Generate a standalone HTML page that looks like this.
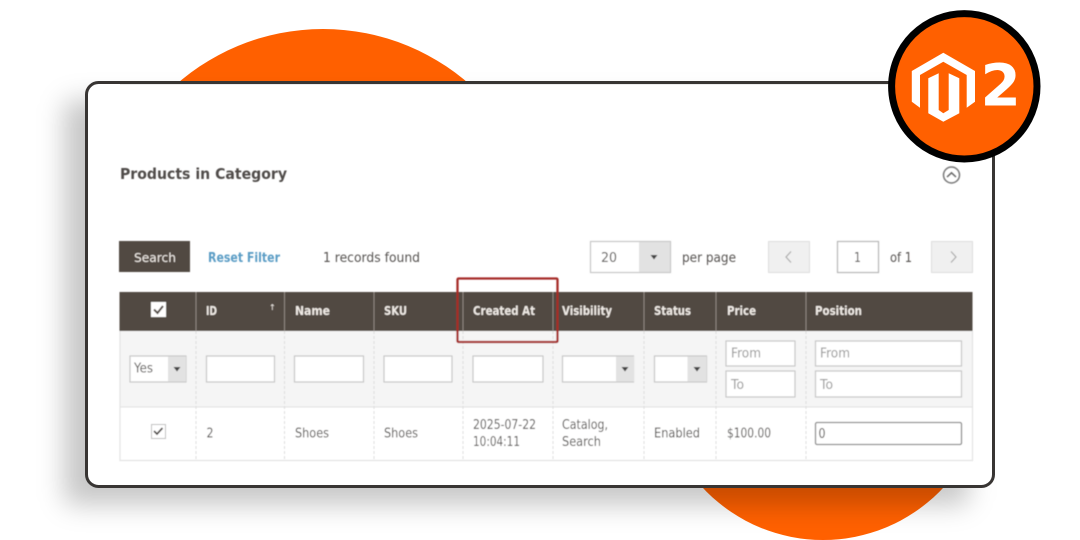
<!DOCTYPE html>
<html><head><meta charset="utf-8"><style>
html,body{margin:0;padding:0;background:#fff;width:1080px;height:540px;overflow:hidden}
svg{display:block}
text{font-family:"DejaVu Sans","Liberation Sans",sans-serif}
.t{font-size:13px;fill:#565351}
.h{font-size:12.7px;font-weight:bold;fill:#efeae5}
.p{font-size:13px;fill:#999}
.i{fill:#fff;stroke:#c6c6c6;stroke-width:1.2}
.ar{fill:#e2e2e2}
</style></head><body>
<svg width="1080" height="540" viewBox="0 0 1080 540" xmlns="http://www.w3.org/2000/svg">
<defs>
<filter id="s" x="-20%" y="-20%" width="140%" height="140%"><feGaussianBlur stdDeviation="13"/></filter>
<filter id="b" x="-2%" y="-2%" width="104%" height="104%"><feGaussianBlur stdDeviation="0.4"/></filter>
</defs>
<circle cx="323" cy="251" r="222" fill="#ff6000"/>
<circle cx="823" cy="375.5" r="164.5" fill="#ff6000"/>
<rect x="64" y="100" width="905" height="405" rx="10" fill="#000" fill-opacity=".22" filter="url(#s)"/>
<rect x="86.500" y="82.500" width="907" height="404" rx="12" fill="#fff" stroke="#383533" stroke-width="3"/>
<rect x="120" y="84" width="873" height="1" fill="#ececec"/>
<g filter="url(#b)">
<text x="120" y="179" font-size="15.500" font-weight="bold" fill="#4f4b48" textLength="167" lengthAdjust="spacingAndGlyphs">Products in Category</text>
<circle cx="951.500" cy="175" r="8" fill="none" stroke="#777" stroke-width="1.500"/>
<path d="M947 177 L951.500 172.800 L956 177" fill="none" stroke="#666" stroke-width="1.500"/>

<rect x="119" y="241" width="71" height="31" fill="#514943"/>
<text x="134" y="262" class="h" textLength="42" lengthAdjust="spacingAndGlyphs" style="font-weight:normal">Search</text>
<text x="208" y="262" font-size="13" font-weight="bold" fill="#5a9cc5" textLength="72" lengthAdjust="spacingAndGlyphs">Reset Filter</text>
<text x="323" y="262" class="t" textLength="97" lengthAdjust="spacingAndGlyphs">1 records found</text>

<rect x="590.500" y="241.500" width="80" height="31" class="i"/>
<rect x="639" y="242" width="31" height="30" class="ar"/>
<path d="M650.500 255h7l-3.500 4.500z" fill="#444"/>
<text x="601" y="262" class="t" textLength="16" lengthAdjust="spacingAndGlyphs">20</text>
<text x="682" y="262" class="t" textLength="54" lengthAdjust="spacingAndGlyphs">per page</text>
<rect x="768.500" y="241.500" width="41" height="31" fill="#f0f0f0" stroke="#dedede"/>
<path d="M791 251.500 L786 257 L791 262.500" fill="none" stroke="#aaa" stroke-width="1.200"/>
<rect x="837.500" y="241.500" width="41" height="31" class="i" style="stroke:#b5b5b5"/>
<text x="854" y="262" class="t" textLength="7" lengthAdjust="spacingAndGlyphs">1</text>
<text x="890" y="262" class="t" textLength="22" lengthAdjust="spacingAndGlyphs">of 1</text>
<rect x="931.500" y="241.500" width="41" height="31" fill="#f0f0f0" stroke="#dedede"/>
<path d="M951 251.500 L956 257 L951 262.500" fill="none" stroke="#aaa" stroke-width="1.200"/>

<rect x="119.500" y="331" width="853" height="76" fill="#f5f5f5"/>
<rect x="119.500" y="407" width="853" height="53" fill="#fff"/>
<path d="M120 331V460.500H972.500V331" fill="none" stroke="#e3e3e3" stroke-width="1.200"/>
<path d="M120 407H972" stroke="#e0e0e0" stroke-width="1"/>
<path d="M196 331V460M284.500 331V460M374 331V460M463 331V460M553 331V460M644 331V460M716 331V460M806 331V460" stroke="#dcdcdc" stroke-width="1" stroke-dasharray="3 2"/>
<rect x="119.500" y="292" width="853" height="39" fill="#514943"/>
<path d="M196 292V331M284.500 292V331M374 292V331M463 292V331M553 292V331M644 292V331M716 292V331M806 292V331" stroke="#8f8780" stroke-width="1"/>

<rect x="151" y="302" width="15" height="15" fill="#fff"/>
<path d="M154 309.500 L157.500 313 L163 306" fill="none" stroke="#514943" stroke-width="2"/>
<text x="206" y="315" class="h" textLength="11" lengthAdjust="spacingAndGlyphs">ID</text>
<text x="269" y="310" font-size="8" fill="#efeae5">↑</text>
<text x="295" y="315" class="h" textLength="35" lengthAdjust="spacingAndGlyphs">Name</text>
<text x="384" y="315" class="h" textLength="23" lengthAdjust="spacingAndGlyphs">SKU</text>
<text x="473" y="315" class="h" textLength="62" lengthAdjust="spacingAndGlyphs">Created At</text>
<text x="562" y="315" class="h" textLength="50" lengthAdjust="spacingAndGlyphs">Visibility</text>
<text x="654" y="315" class="h" textLength="37" lengthAdjust="spacingAndGlyphs">Status</text>
<text x="727" y="315" class="h" textLength="29" lengthAdjust="spacingAndGlyphs">Price</text>
<text x="815" y="315" class="h" textLength="47" lengthAdjust="spacingAndGlyphs">Position</text>

<rect x="130" y="356" width="56" height="26" class="i"/>
<rect x="168" y="356.500" width="18" height="25" class="ar"/>
<path d="M173.500 367h7l-3.500 4.500z" fill="#444"/>
<text x="134" y="372.500" class="t" textLength="19" lengthAdjust="spacingAndGlyphs">Yes</text>
<rect x="206.500" y="356" width="68" height="26" class="i"/>
<rect x="294.500" y="356" width="69" height="26" class="i"/>
<rect x="384" y="356" width="68" height="26" class="i"/>
<rect x="473" y="356" width="70" height="26" class="i"/>
<rect x="562.500" y="356" width="71" height="26" class="i"/>
<rect x="616" y="356.500" width="18" height="25" class="ar"/>
<path d="M621.500 367h7l-3.500 4.500z" fill="#444"/>
<rect x="654.500" y="356" width="52" height="26" class="i"/>
<rect x="687.500" y="356.500" width="19" height="25" class="ar"/>
<path d="M693.500 367h7l-3.500 4.500z" fill="#444"/>
<rect x="726" y="341" width="69" height="25" class="i"/>
<rect x="726" y="371" width="69" height="26" class="i"/>
<rect x="815.500" y="341" width="146" height="25" class="i"/>
<rect x="815.500" y="371" width="146" height="26" class="i"/>
<text x="731" y="357.500" class="p" textLength="30" lengthAdjust="spacingAndGlyphs">From</text>
<text x="731" y="389" class="p" textLength="13" lengthAdjust="spacingAndGlyphs">To</text>
<text x="820" y="357.500" class="p" textLength="30" lengthAdjust="spacingAndGlyphs">From</text>
<text x="820" y="389" class="p" textLength="13" lengthAdjust="spacingAndGlyphs">To</text>

<rect x="151.500" y="424.500" width="14" height="14" fill="#fff" stroke="#bdbdbd"/>
<path d="M154 431 L157 434 L162.500 428" fill="none" stroke="#4a4542" stroke-width="1.700"/>
<text x="206.500" y="437.500" class="t" textLength="7" lengthAdjust="spacingAndGlyphs">2</text>
<text x="295" y="437.500" class="t" textLength="34" lengthAdjust="spacingAndGlyphs">Shoes</text>
<text x="384" y="437.500" class="t" textLength="34" lengthAdjust="spacingAndGlyphs">Shoes</text>
<text x="473" y="429" class="t" textLength="63" lengthAdjust="spacingAndGlyphs">2025-07-22</text>
<text x="473" y="446" class="t" textLength="47" lengthAdjust="spacingAndGlyphs">10:04:11</text>
<text x="562" y="429" class="t" textLength="46" lengthAdjust="spacingAndGlyphs">Catalog,</text>
<text x="562" y="446" class="t" textLength="39" lengthAdjust="spacingAndGlyphs">Search</text>
<text x="654" y="437.500" class="t" textLength="46" lengthAdjust="spacingAndGlyphs">Enabled</text>
<text x="727" y="437.500" class="t" textLength="44" lengthAdjust="spacingAndGlyphs">$100.00</text>
<rect x="815.500" y="422.500" width="146" height="22" rx="1.500" fill="#fff" stroke="#8a8a8a" stroke-width="1.300"/>
<text x="818.500" y="438" class="t" textLength="7" lengthAdjust="spacingAndGlyphs">0</text>

<rect x="457.500" y="278.500" width="100" height="63.500" rx="1" fill="none" stroke="#a62a28" stroke-width="2.300"/>
</g>

<circle cx="964.300" cy="86.300" r="72.700" fill="#ff6000" stroke="#000" stroke-width="7"/>
<path fill="#fff" d="M943.300 52.800L975 71V101.700L966.700 107.700V75L943.300 61.700L920 75V107.700L911.800 101.700V71Z"/>
<path fill="#fff" d="M928.300 78.300L938.700 73.300V110L943.300 113.300L948.700 110V73.300L959.300 78.300V113.300L943.300 121.700L928.300 113.300Z"/>
<text x="980.500" y="105.700" font-size="58" font-weight="bold" fill="#fff" style="font-family:'DejaVu Sans',sans-serif">2</text>
</svg>
</body></html>
